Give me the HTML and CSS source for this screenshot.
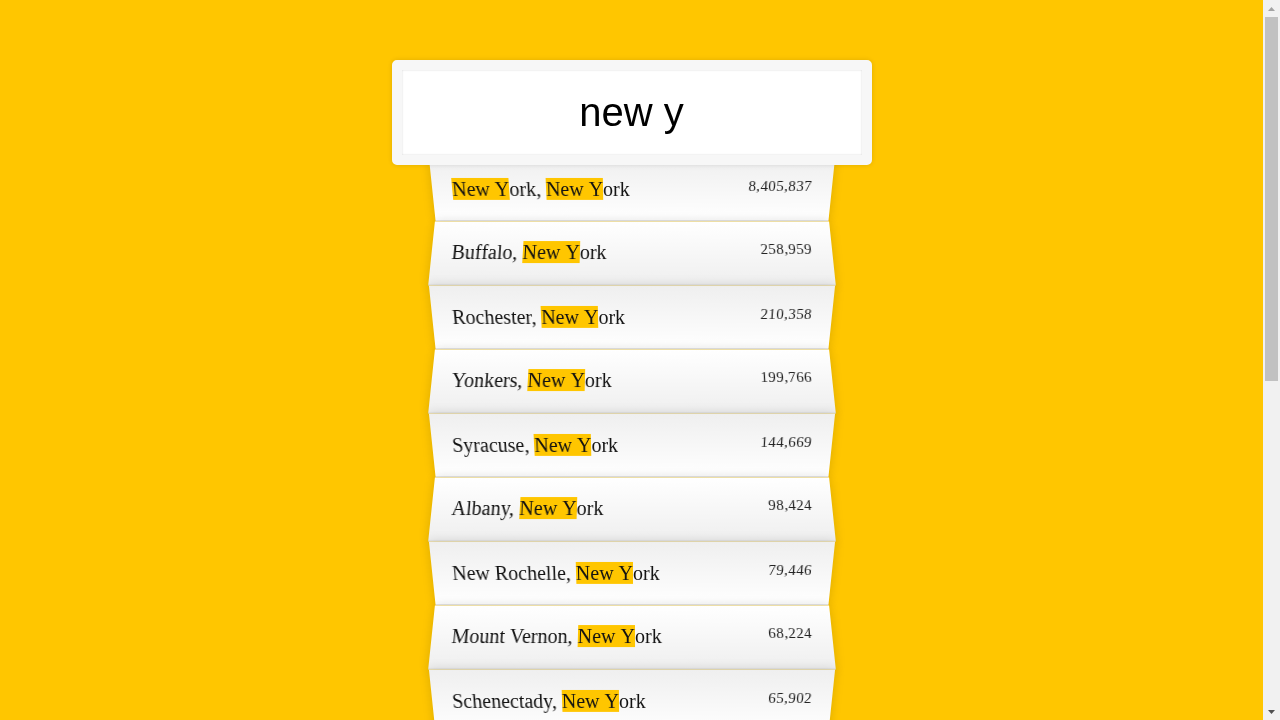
FILE: index.html
```html
<!DOCTYPE html>
<html lang="en">
<head>
<meta charset="utf-8">
<title>Type Ahead</title>
<link rel="stylesheet" href="styles.css">
</head>
<body>
<form class="search-form">
  <div class="search">new y</div>
  <ul class="suggestions">
    <li><span class="name"><span class="hl">New Y</span>ork, <span class="hl">New Y</span>ork</span><span class="population">8,405,837</span></li>
    <li><span class="name">Buffalo, <span class="hl">New Y</span>ork</span><span class="population">258,959</span></li>
    <li><span class="name">Rochester, <span class="hl">New Y</span>ork</span><span class="population">210,358</span></li>
    <li><span class="name">Yonkers, <span class="hl">New Y</span>ork</span><span class="population">199,766</span></li>
    <li><span class="name">Syracuse, <span class="hl">New Y</span>ork</span><span class="population">144,669</span></li>
    <li><span class="name">Albany, <span class="hl">New Y</span>ork</span><span class="population">98,424</span></li>
    <li><span class="name">New Rochelle, <span class="hl">New Y</span>ork</span><span class="population">79,446</span></li>
    <li><span class="name">Mount Vernon, <span class="hl">New Y</span>ork</span><span class="population">68,224</span></li>
    <li><span class="name">Schenectady, <span class="hl">New Y</span>ork</span><span class="population">65,902</span></li>
    <li><span class="name">Utica, <span class="hl">New Y</span>ork</span><span class="population">61,808</span></li>
    <li><span class="name">White Plains, <span class="hl">New Y</span>ork</span><span class="population">57,866</span></li>
    <li><span class="name">Hempstead, <span class="hl">New Y</span>ork</span><span class="population">55,361</span></li>
    <li><span class="name">Troy, <span class="hl">New Y</span>ork</span><span class="population">49,974</span></li>
    <li><span class="name">Niagara Falls, <span class="hl">New Y</span>ork</span><span class="population">49,468</span></li>
    <li><span class="name">Binghamton, <span class="hl">New Y</span>ork</span><span class="population">46,444</span></li>
    <li><span class="name">Freeport, <span class="hl">New Y</span>ork</span><span class="population">43,167</span></li>
    <li><span class="name">Valley Stream, <span class="hl">New Y</span>ork</span><span class="population">37,659</span></li>
    <li><span class="name">Long Beach, <span class="hl">New Y</span>ork</span><span class="population">33,275</span></li>
  </ul>
</form>
<div class="scrollbar" aria-hidden="true">
  <div class="sb-btn">
    <svg width="7" height="4" viewBox="0 0 7 4"><path d="M3.5 0 L7 4 L0 4 Z" fill="#a3a3a3"/></svg>
  </div>
  <div class="sb-thumb"></div>
  <div class="sb-fill"></div>
  <div class="sb-btn">
    <svg width="7" height="4" viewBox="0 0 7 4"><path d="M0 0 L7 0 L3.5 4 Z" fill="#505050"/></svg>
  </div>
</div>
</body>
</html>
```
FILE: styles.css
```css
html {
  box-sizing: border-box;
  background: #ffc600;
  font-family: "Liberation Serif", "Times New Roman", serif;
  font-size: 20px;
}

*, *::before, *::after {
  box-sizing: inherit;
}

body {
  margin: 0 17px 0 0;
}

.search-form {
  max-width: 400px;
  margin: 0 auto;
  padding: 60px 0 50px;
}

.search {
  position: relative;
  z-index: 2;
  width: 120%;
  margin: 0 0 -10px -10%;
  padding: 20px;
  border: 10px solid #f7f7f7;
  border-radius: 5px;
  background: #fff;
  font-family: "Liberation Sans", Arial, sans-serif;
  font-size: 40px;
  line-height: 45px;
  color: #000;
  text-align: center;
  box-shadow: 0 0 5px rgba(0, 0, 0, 0.12), inset 0 0 2px rgba(0, 0, 0, 0.19);
}

.suggestions {
  margin: 0;
  padding: 0;
  position: relative;
}

.suggestions li {
  background: #fff;
  list-style: none;
  border-bottom: 1px solid #d8d8d8;
  box-shadow: 0 0 10px rgba(0, 0, 0, 0.14);
  margin: 0;
  padding: 20px;
  display: flex;
  justify-content: space-between;
  line-height: 23px;
  color: #111;
}

.suggestions li:nth-child(even) {
  transform: perspective(100px) rotateX(3deg) translateY(2px) scale(1.001);
  background: linear-gradient(to bottom, #ffffff 0%, #efefef 100%);
}

.suggestions li:nth-child(odd) {
  transform: perspective(100px) rotateX(-3deg) translateY(3px);
  background: linear-gradient(to top, #ffffff 0%, #efefef 100%);
}

.population {
  font-size: 15px;
  line-height: 17px;
  letter-spacing: 0.4px;
  font-kerning: none;
  color: #222;
}

.hl {
  background: #ffc600;
  font-kerning: none;
}

.scrollbar {
  position: fixed;
  top: 0;
  right: 0;
  width: 17px;
  height: 100vh;
  background: #f1f1f1;
  display: flex;
  flex-direction: column;
  z-index: 10;
}

.sb-btn {
  height: 17px;
  flex: none;
  display: flex;
  align-items: center;
  justify-content: center;
}

.sb-btn svg {
  display: block;
}

.sb-thumb {
  flex: none;
  height: 364px;
  margin: 0 2px;
  background: #c1c1c1;
}

.sb-fill {
  flex: 1;
}
```
